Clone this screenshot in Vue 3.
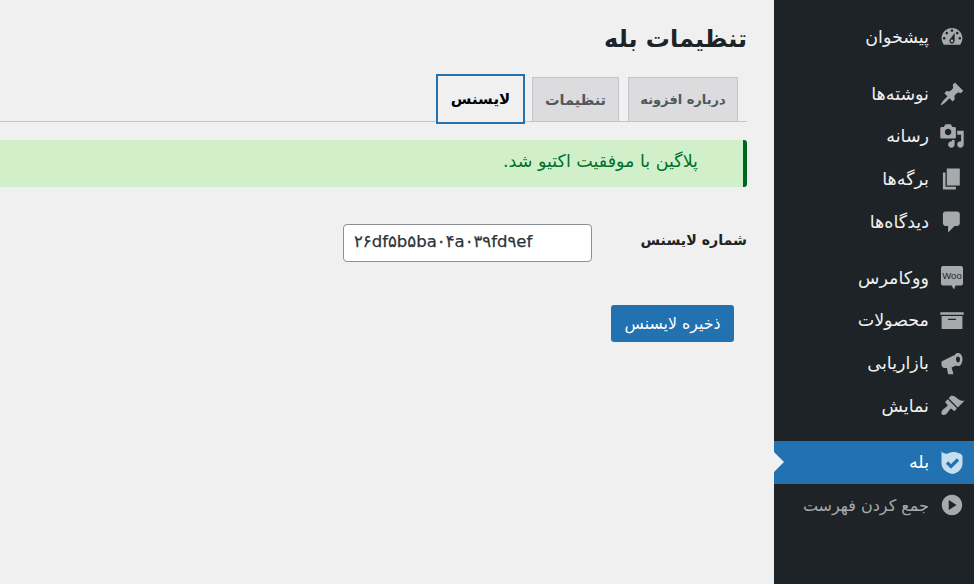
<script setup>
const dash = 'M3.76 16h12.48c1.1-1.37 1.76-3.11 1.76-5 0-4.42-3.58-8-8-8s-8 3.58-8 8c0 1.89.66 3.63 1.76 5zM10 4c.55 0 1 .45 1 1s-.45 1-1 1-1-.45-1-1 .45-1 1-1zM6 6c.55 0 1 .45 1 1s-.45 1-1 1-1-.45-1-1 .45-1 1-1zm8 0c.55 0 1 .45 1 1s-.45 1-1 1-1-.45-1-1 .45-1 1-1zm-5.37 5.55L12 7v6c0 1.1-.9 2-2 2s-2-.9-2-2c0-.57.24-1.08.63-1.45zM4 10c.55 0 1 .45 1 1s-.45 1-1 1-1-.45-1-1 .45-1 1-1zm12 0c.55 0 1 .45 1 1s-.45 1-1 1-1-.45-1-1 .45-1 1-1zm-5 3c0-.55-.45-1-1-1s-1 .45-1 1 .45 1 1 1 1-.45 1-1z'
const groups = [
  [{ t: 'پیشخوان', d: dash }],
  [
    { t: 'نوشته‌ها', d: 'M10.44 3.02l1.82-1.82 6.36 6.35-1.83 1.82c-1.05-.68-2.48-.57-3.41.36l-.75.75c-.92.93-1.04 2.35-.35 3.41l-1.83 1.82-2.41-2.41-2.8 2.79c-.42.42-3.38 2.71-3.8 2.29s1.86-3.39 2.28-3.81l2.79-2.79L4.1 9.36l1.83-1.82c1.05.69 2.48.57 3.4-.36l.75-.75c.93-.92 1.05-2.35.36-3.41z' },
    { t: 'رسانه', d: 'M13 11V4c0-.55-.45-1-1-1h-1.67L9 1H5L3.67 3H2c-.55 0-1 .45-1 1v7c0 .55.45 1 1 1h10c.55 0 1-.45 1-1zM7 4.5c1.38 0 2.5 1.12 2.5 2.5S8.38 9.5 7 9.5 4.5 8.38 4.5 7 5.62 4.5 7 4.5zM14 6h5v10.5c0 1.38-1.12 2.5-2.5 2.5S14 17.88 14 16.5s1.12-2.5 2.5-2.5c.17 0 .34.02.5.05V9h-3V6zm-4 8.05V13h2v3.5c0 1.38-1.12 2.5-2.5 2.5S7 17.88 7 16.5 8.12 14 9.5 14c.17 0 .34.02.5.05z' },
    { t: 'برگه‌ها', d: 'M6 15V2h10v13H6zm-1 1h8v2H3V5h2v11z' },
    { t: 'دیدگاه‌ها', d: 'M5 2h9c1.1 0 2 .9 2 2v7c0 1.1-.9 2-2 2h-2l-5 5v-5H5c-1.1 0-2-.9-2-2V4c0-1.1.9-2 2-2z' }
  ],
  [
    { t: 'ووکامرس', woo: true },
    { t: 'محصولات', d: 'M19 4v2H1V4h18zM2 7h16v10H2V7zm11 3V9H7v1h6z' },
    { t: 'بازاریابی', mega: true },
    { t: 'نمایش', d: 'M14.48 11.06L7.41 3.99l1.5-1.5c.5-.56 2.3-.47 3.51.32 1.21.8 1.43 1.28 2.91 2.1 1.18.64 2.45 1.26 4.45.85zm-.71.71L6.7 4.77 5.2 6.27c-.39.39-.39 1.02 0 1.41l1.06 1.06c.39.39.39 1.03 0 1.42-.6.6-1.43 1.11-2.21 1.69-.35.26-.7.53-1.01.84-1.34 1.31-1.5 3.3-.89 3.91.61.61 2.6.45 3.91-.89.31-.31.58-.66.84-1.01.58-.78 1.09-1.61 1.69-2.21.39-.39 1.03-.39 1.42 0l1.06 1.06c.39.39 1.02.39 1.41 0z' }
  ]
]
const tabs = [
  { t: 'درباره افزونه', w: 'w1' },
  { t: 'تنظیمات', w: 'w2' },
  { t: 'لایسنس', w: 'w3 current' }
]
</script>

<template>
  <div class="page" dir="rtl">
    <aside class="side">
      <ul v-for="(g, i) in groups" :key="i" class="group">
        <li v-for="it in g" :key="it.t" class="item">
          <svg v-if="it.woo" class="ico" viewBox="0 0 26 26">
            <path d="M4 1h18c1.100 0 2 .9 2 2v15.500c0 1.100-.9 2-2 2h-5.500l-1.500 4-2.500-4H4c-1.100 0-2-.9-2-2V3c0-1.100.9-2 2-2z" fill="#a7aaad" />
            <text x="13" y="14" text-anchor="middle" direction="ltr" class="woo">Woo</text>
          </svg>
          <svg v-else-if="it.mega" class="ico" viewBox="0 0 26 26">
            <path d="M2.500 11.500l13-6.500 3 10-6 2.500 1.700 5.500c.2.700-.2 1.300-.9 1.300H10c-.6 0-1-.3-1.100-.9L8 18H5.500c-1.600 0-3-1.500-3-3.500z" fill="#a7aaad" />
            <path d="M18 3c3.200-.6 5.500 2.300 5.500 6.200S21.500 16 19.500 16c-2.800 0-4.500-3-4.500-6.800 0-3 1-5.700 3-6.200zm1 3.500c-1.300 0-2 1.200-2 2.900s.8 3 2 3 2-1.300 2-3-.7-2.900-2-2.900z" fill="#a7aaad" fill-rule="evenodd" />
          </svg>
          <svg v-else class="ico" viewBox="0 0 20 20"><path :d="it.d" fill="#a7aaad" /></svg>
          <span>{{ it.t }}</span>
        </li>
      </ul>
      <ul class="group">
        <li class="item active">
          <svg class="ico" viewBox="0 0 26 26">
            <path d="M2.500 2.500c2 2 4.500 2.700 6.500 2 1.500-.5 3-1.500 5-1.500 3.500 0 9.500 1.500 9.500 4.500v7c0 5.500-4.500 9.500-10 10.500-5.500-1-11-5-11-10.500z" fill="#c5def0" />
            <path d="M8 13.500l4 4 7-7" fill="none" stroke="#2271b1" stroke-width="3.200" />
          </svg>
          <span>بله</span>
        </li>
        <li class="item muted">
          <svg class="ico" viewBox="0 0 20 20">
            <path d="M10 2.160c4.330 0 7.840 3.510 7.840 7.840s-3.510 7.840-7.840 7.840S2.160 14.330 2.160 10 5.670 2.160 10 2.160zM7.500 6.120v7.760L13.500 10z" fill="#a7aaad" fill-rule="evenodd" />
          </svg>
          <span>جمع کردن فهرست</span>
        </li>
      </ul>
    </aside>

    <main class="main">
      <h1 class="title">تنظیمات بله</h1>
      <nav class="tabs">
        <a v-for="tab in tabs" :key="tab.t" class="tab" :class="tab.w">{{ tab.t }}</a>
      </nav>
      <div class="notice"><p>پلاگین با موفقیت اکتیو شد.</p></div>
      <div class="field">
        <label class="lbl">شماره لایسنس</label>
        <input class="inp" dir="ltr" value="۲۶df۵b۵ba۰۴a۰۳۹fd۹ef" />
      </div>
      <button class="save">ذخیره لایسنس</button>
    </main>
  </div>
</template>

<style>
html, body { margin: 0; background: #f0f0f1; }
</style>

<style scoped>
.page {
  display: flex;
  width: 974px;
  height: 584px;
  overflow: hidden;
  background: #f0f0f1;
  font-family: "DejaVu Sans", "Noto Sans", sans-serif;
  color: #1d2327;
}
.side {
  flex: 0 0 200px;
  background: #1d2327;
  padding-top: 16px;
  box-sizing: border-box;
}
.group { list-style: none; margin: 0 0 13.500px; padding: 0; }
.item {
  height: 42.700px;
  display: flex;
  align-items: center;
  gap: 10px;
  padding-right: 9px;
  font-size: 17.500px;
  color: #f0f0f1;
  position: relative;
}
.ico { width: 26px; height: 26px; flex: none; }
.woo { font-size: 9.500px; font-weight: 400; fill: #1d2327; font-family: "Liberation Sans", sans-serif; }
.active { background: #2271b1; color: #fff; height: 43px; }
.active::after {
  content: "";
  position: absolute;
  left: 0;
  top: 50%;
  margin-top: -10px;
  border: 10px solid transparent;
  border-left-color: #f0f0f1;
  border-right-width: 0;
}
.muted { color: #a7aaad; font-size: 16px; }
.main {
  flex: 1;
  min-width: 0;
  padding: 0 27px 0 0;
}
.title {
  margin: 0;
  padding-top: 22px;
  font-size: 24px;
  line-height: 34px;
  font-weight: 700;
}
.tabs {
  margin-top: 21px;
  display: flex;
  gap: 9px;
  height: 44px;
  padding-right: 9px;
  border-bottom: 1px solid #c3c4c7;
}
.tab {
  box-sizing: border-box;
  height: 45px;
  display: flex;
  align-items: center;
  justify-content: center;
  white-space: nowrap;
  font-size: 13px;
  font-weight: 700;
  color: #50575e;
  background: #dcdcde;
  border: 1px solid #c3c4c7;
}
.w1 { width: 110px; }
.w2 { width: 87px; font-size: 14.500px; }
.w3 { width: 89px; font-size: 15px; margin-right: -2px; }
.current {
  position: relative;
  margin-top: -3px;
  height: 50px;
  background: #f0f0f1;
  color: #000;
  border: 2px solid #2271b1;
}
.notice {
  margin-top: 18px;
  height: 47px;
  box-sizing: border-box;
  background: #d1f0ca;
  border-right: 4px solid #00661f;
  border-radius: 0 3px 3px 0;
  display: flex;
  align-items: center;
  padding-right: 45px;
}
.notice p { margin: -6px 0 0; font-size: 17.500px; color: #00702a; }
.field {
  margin-top: 37px;
  display: flex;
  align-items: center;
  gap: 50px;
}
.lbl { width: 105px; font-size: 14.200px; font-weight: 700; white-space: nowrap; margin-top: -6px; }
.inp {
  box-sizing: border-box;
  width: 249px;
  height: 38px;
  padding: 0 10px 4px;
  border: 1px solid #8c8f94;
  border-radius: 4px;
  background: #fff;
  font: 500 16.500px "DejaVu Sans", sans-serif;
  -webkit-text-stroke: 0.25px #2c3338;
  color: #2c3338;
  text-align: left;
}
.save {
  display: block;
  margin: 43px 13px 0 0;
  width: 123px;
  height: 37px;
  border: 0;
  border-radius: 3px;
  background: #2271b1;
  color: #fff;
  font: 400 15.800px "DejaVu Sans", sans-serif;
}
</style>
